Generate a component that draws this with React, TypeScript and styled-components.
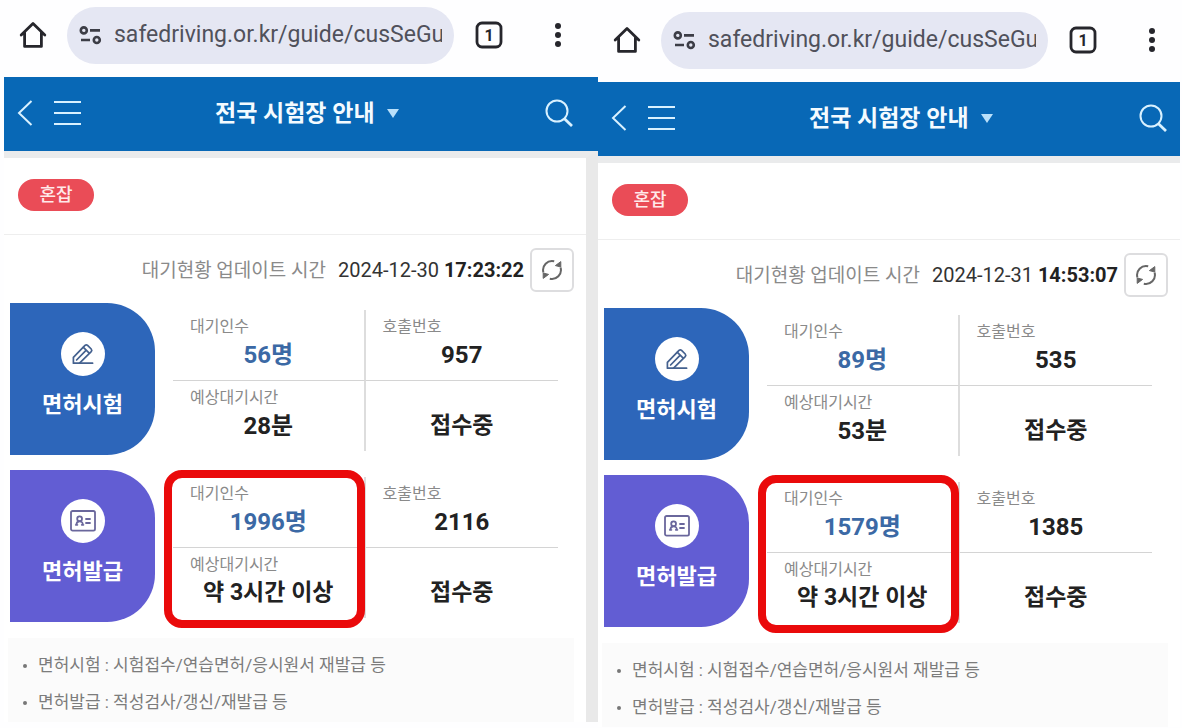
import React from "react";
import styled, { createGlobalStyle } from "styled-components";

const GlobalStyle = createGlobalStyle`
  *, *::before, *::after { box-sizing: border-box; }
  body {
    margin: 0;
    background: #fefeff;
    color: #222;
    font-family: Roboto, "Noto Sans CJK KR", sans-serif;
  }
  button, input, select { font: inherit; }
  dl, dd, dt, ul, p { margin: 0; padding: 0; }
`;

const Page = styled.main`
  display: flex;
  align-items: flex-start;
  padding: 0 2px 0 4px;
`;

const Phone = styled.section<{ $gutter: number; $drop: number }>`
  --gutter: ${(p) => p.$gutter}px;
  flex: 1 1 var(--gutter);
  min-width: 0;
  padding-top: ${(p) => p.$drop}px;
`;

const BrowserBar = styled.div`
  display: flex;
  align-items: center;
  height: 77px;
  padding: 0 calc(var(--gutter) + 15px) 7px 14px;
`;

const IconButton = styled.button<{ $width: number }>`
  display: flex;
  flex: none;
  align-items: center;
  justify-content: center;
  width: ${(p) => p.$width}px;
  height: 30px;
  padding: 0;
  border: 0;
  background: none;
  color: #26262c;
  cursor: pointer;
`;

const AddressPill = styled.label`
  display: flex;
  flex: 1;
  align-items: center;
  gap: 12px;
  min-width: 0;
  height: 57px;
  margin: 0 20px 0 19px;
  padding: 0 12px;
  border-radius: 29px;
  background: #e5e7f3;
  color: #3c3d46;

  svg { flex: none; }
`;

const AddressInput = styled.input`
  flex: 1;
  min-width: 0;
  padding: 0;
  border: 0;
  outline: 0;
  background: none;
  color: #50515b;
  font-size: 23px;
  line-height: 30px;
`;

const BarSpacer = styled.span`
  width: 41px;
`;

const SiteHeader = styled.header`
  display: grid;
  grid-template-columns: 1fr auto 1fr;
  align-items: center;
  height: 74px;
  padding: 0 calc(var(--gutter) + 12px) 2px 12px;
  background: #0868b6;

  button { color: #d9f1ff; }
`;

const HeaderSide = styled.div<{ $end?: boolean }>`
  display: flex;
  gap: 18px;
  justify-content: ${(p) => (p.$end ? "flex-end" : "flex-start")};
`;

const TitlePicker = styled.div`
  position: relative;
  color: #b9e0fa;

  svg {
    position: absolute;
    top: 13px;
    right: 0;
    pointer-events: none;
  }
`;

const TitleSelect = styled.select`
  appearance: none;
  height: 34px;
  padding: 0 24px;
  border: 0;
  outline: 0;
  background: none;
  color: #f4fbff;
  font-size: 23px;
  font-weight: 700;
  cursor: pointer;
`;

const Body = styled.div`
  border-top: 7px solid #eaebec;
  border-right: var(--gutter) solid #e9e9e9;
  background: #fff;
`;

const StatusSection = styled.div`
  height: 77px;
  padding: 21px 14px 0;
  border-bottom: 1px solid #eeeeee;
`;

const StatusBadge = styled.span`
  display: flex;
  align-items: center;
  justify-content: center;
  width: 76px;
  height: 32px;
  border-radius: 16px;
  background: #ea4c57;
  color: #ffe9ea;
  font-size: 18px;
  font-weight: 500;
  line-height: 32px;
`;

const UpdateRow = styled.div`
  display: flex;
  align-items: center;
  justify-content: flex-end;
  gap: 6px;
  height: 56px;
  padding: 0 12px 0 0;
  margin-top: 7px;
`;

const UpdateText = styled.p`
  padding-bottom: 4px;
  font-size: 20px;
  white-space: nowrap;
`;

const UpdateLabel = styled.span`
  margin-right: 12px;
  color: #8a8a8a;
  font-size: 19px;
`;

const UpdateTime = styled.time`
  color: #333;

  strong { color: #222; font-weight: 700; }
`;

const RefreshButton = styled.button`
  display: flex;
  flex: none;
  align-items: center;
  justify-content: center;
  width: 44px;
  height: 44px;
  padding: 0;
  border: 2px solid #dddddf;
  border-radius: 6px;
  background: #fff;
  color: #666;
  cursor: pointer;
`;

const QueueList = styled.div`
  display: flex;
  flex-direction: column;
  gap: 15px;
  padding: 5px 28px 0 6px;
`;

const QueueCard = styled.article`
  display: flex;
  gap: 18px;
`;

const QueueName = styled.div<{ $color: string }>`
  display: flex;
  flex: none;
  flex-direction: column;
  align-items: center;
  width: 145px;
  height: 152px;
  padding-top: 29px;
  border-radius: 0 48px 48px 0;
  background: ${(p) => p.$color};
  color: #fff;
  font-size: 22px;
  font-weight: 700;
  line-height: 30px;
`;

const IconDisc = styled.span`
  display: flex;
  align-items: center;
  justify-content: center;
  width: 44px;
  height: 44px;
  margin-bottom: 14px;
  border-radius: 50%;
  background: #fff;
`;

const Figures = styled.dl`
  position: relative;
  display: grid;
  flex: 1;
  grid-template-columns: 1fr 1fr;
  grid-template-rows: 71px 70px;
  min-width: 0;
  margin-top: 7px;
`;

const Figure = styled.div<{ $right?: boolean; $bottom?: boolean }>`
  padding-top: 5px;
  border-right: ${(p) => (p.$right ? "0" : "2px")} solid #dddddd;
  border-bottom: ${(p) => (p.$bottom ? "0" : "1px")} solid #d4d4d4;

  dt {
    height: 24px;
    padding-left: 17px;
    color: #8a8a8a;
    font-size: 16px;
    line-height: 24px;
  }
`;

const FigureValue = styled.dd<{ $accent?: boolean; $words?: boolean }>`
  color: ${(p) => (p.$accent ? "#3b69a5" : "#222")};
  font-size: ${(p) => (p.$words ? 23 : 24)}px;
  font-weight: 700;
  line-height: 32px;
  text-align: center;
  white-space: nowrap;
`;

const Highlight = styled.span`
  position: absolute;
  top: -7px;
  left: -9px;
  width: calc(50% + 8px);
  height: 158px;
  border: 8px solid #ea0a0b;
  border-radius: 18px;
  pointer-events: none;
`;

const Notes = styled.ul`
  margin: 16px 12px 0 4px;
  padding: 9px 12px 1px;
  background: #fbfbfb;
  list-style: none;
  color: #7c7c7c;
  font-size: 17px;
  line-height: 37px;

  li {
    display: flex;
    align-items: center;
    gap: 11px;
    white-space: nowrap;
  }

  li::before {
    content: "";
    width: 4px;
    height: 4px;
    margin-left: 3px;
    border-radius: 50%;
    background: #777;
  }
`;

const HomeIcon = () => (
  <svg width="28" height="28" viewBox="0 0 28 28" fill="none" stroke="currentColor" strokeWidth="2.8" strokeLinejoin="round" strokeLinecap="round">
    <path d="M2.2 14 14 2.4 25.8 14M5.6 11.5V25.4H22.4V11.5" />
  </svg>
);

const TuneIcon = () => (
  <svg width="23" height="19" viewBox="0 0 23 19" fill="none" stroke="currentColor" strokeWidth="2.6">
    <circle cx="4.8" cy="4.4" r="3" />
    <path d="M11 4.4H21M2 14H11" />
    <circle cx="17.8" cy="14" r="3" />
  </svg>
);

const TabsIcon = () => (
  <svg width="28" height="28" viewBox="0 0 28 28">
    <rect x="2" y="2" width="24" height="24" rx="5" fill="none" stroke="currentColor" strokeWidth="2.8" />
    <text x="14" y="20" textAnchor="middle" fontSize="16" fontWeight="700" fill="currentColor">1</text>
  </svg>
);

const MoreIcon = () => (
  <svg width="8" height="26" viewBox="0 0 8 26" fill="currentColor">
    <circle cx="4" cy="4" r="3" />
    <circle cx="4" cy="13" r="3" />
    <circle cx="4" cy="22" r="3" />
  </svg>
);

const BackIcon = () => (
  <svg width="16" height="28" viewBox="0 0 16 28" fill="none" stroke="currentColor" strokeWidth="2">
    <path d="M14.5 2 2 14 14.5 26" />
  </svg>
);

const MenuIcon = () => (
  <svg width="28" height="28" viewBox="0 0 28 28" fill="none" stroke="currentColor" strokeWidth="2">
    <path d="M0 3H27M0 14H27M0 25H27" />
  </svg>
);

const SearchIcon = () => (
  <svg width="28" height="28" viewBox="0 0 28 28" fill="none" stroke="currentColor" strokeWidth="2">
    <circle cx="12" cy="12" r="10.5" />
    <path d="M19.2 19.6 27 27" strokeWidth="2.8" />
  </svg>
);

const CaretIcon = () => (
  <svg width="12" height="9" viewBox="0 0 12 9" fill="currentColor">
    <path d="M0 0H12L6 9Z" />
  </svg>
);

const RefreshIcon = () => (
  <svg width="22" height="22" viewBox="0 0 22 22" fill="none" stroke="currentColor" strokeWidth="2">
    <path d="M2.4 13.4A9 9 0 0 1 13.2 2.3M19.6 8.6A9 9 0 0 1 8.8 19.7" />
    <path d="M19.8 2.6V8L14.4 6.6ZM2.2 19.4V14L7.6 15.4Z" fill="currentColor" stroke="currentColor" strokeWidth="1" />
  </svg>
);

const PencilIcon = () => (
  <svg width="22" height="22" viewBox="0 0 22 22" fill="none" stroke="#44618f" strokeWidth="1.7" strokeLinejoin="round" strokeLinecap="round">
    <path d="M1.4 20.2V14.4L13 2.4Q14.3 1.2 15.6 2.4L19.2 6Q20.4 7.3 19.2 8.6L7.6 20.2Z" />
    <path d="M11.4 4.4 17.2 10.2M4.6 17 14 7.4M7.6 20.2H20.6" />
  </svg>
);

const LicenseIcon = () => (
  <svg width="26" height="22" viewBox="0 0 26 22" fill="none" stroke="#6a679c" strokeWidth="1.8" strokeLinejoin="round" strokeLinecap="round">
    <rect x="1" y="1" width="24" height="19.6" rx="1.6" />
    <circle cx="9.6" cy="8.8" r="2.4" />
    <path d="M6.4 14.8Q6.4 11.4 9.6 11.4T12.8 14.8M5.8 14.8H7.4M11.8 14.8H13.4M16 9H20M16 13H20" />
  </svg>
);

interface Queue {
  name: string;
  color: string;
  icon: React.ReactNode;
  waiting: string;
  called: string;
  wait: string;
  highlighted?: boolean;
}

interface Snapshot {
  id: string;
  date: string;
  time: string;
  gutter: number;
  drop: number;
  queues: Queue[];
}

const exam = { name: "면허시험", color: "#2d66ba", icon: <PencilIcon /> };
const issue = { name: "면허발급", color: "#625dd3", icon: <LicenseIcon />, highlighted: true };

const snapshots: Snapshot[] = [
  {
    id: "first",
    date: "2024-12-30",
    time: "17:23:22",
    gutter: 12,
    drop: 0,
    queues: [
      { ...exam, waiting: "56명", called: "957", wait: "28분" },
      { ...issue, waiting: "1996명", called: "2116", wait: "약 3시간 이상" },
    ],
  },
  {
    id: "second",
    date: "2024-12-31",
    time: "14:53:07",
    gutter: 0,
    drop: 5,
    queues: [
      { ...exam, waiting: "89명", called: "535", wait: "53분" },
      { ...issue, waiting: "1579명", called: "1385", wait: "약 3시간 이상" },
    ],
  },
];

const QueueRow = ({ queue }: { queue: Queue }) => (
  <QueueCard>
    <QueueName $color={queue.color}>
      <IconDisc>{queue.icon}</IconDisc>
      {queue.name}
    </QueueName>
    <Figures>
      <Figure>
        <dt>대기인수</dt>
        <FigureValue $accent>{queue.waiting}</FigureValue>
      </Figure>
      <Figure $right>
        <dt>호출번호</dt>
        <FigureValue>{queue.called}</FigureValue>
      </Figure>
      <Figure $bottom>
        <dt>예상대기시간</dt>
        <FigureValue $words={queue.wait.includes(" ")}>{queue.wait}</FigureValue>
      </Figure>
      <Figure $right $bottom>
        <dt />
        <FigureValue $words>접수중</FigureValue>
      </Figure>
      {queue.highlighted && <Highlight />}
    </Figures>
  </QueueCard>
);

const PhoneView = ({ shot }: { shot: Snapshot }) => (
  <Phone $gutter={shot.gutter} $drop={shot.drop}>
    <BrowserBar>
      <IconButton $width={30} aria-label="홈"><HomeIcon /></IconButton>
      <AddressPill htmlFor={`address-${shot.id}`}>
        <TuneIcon />
        <AddressInput id={`address-${shot.id}`} aria-label="주소" defaultValue="safedriving.or.kr/guide/cusSeGuide" />
      </AddressPill>
      <IconButton $width={30} aria-label="탭"><TabsIcon /></IconButton>
      <BarSpacer />
      <IconButton $width={26} aria-label="더보기"><MoreIcon /></IconButton>
    </BrowserBar>
    <SiteHeader>
      <HeaderSide>
        <IconButton $width={18} aria-label="뒤로"><BackIcon /></IconButton>
        <IconButton $width={32} aria-label="메뉴"><MenuIcon /></IconButton>
      </HeaderSide>
      <TitlePicker>
        <TitleSelect aria-label="페이지 선택">
          <option>전국 시험장 안내</option>
        </TitleSelect>
        <CaretIcon />
      </TitlePicker>
      <HeaderSide $end>
        <IconButton $width={30} aria-label="검색"><SearchIcon /></IconButton>
      </HeaderSide>
    </SiteHeader>
    <Body>
      <StatusSection>
        <StatusBadge>혼잡</StatusBadge>
      </StatusSection>
      <UpdateRow>
        <UpdateText>
          <UpdateLabel>대기현황 업데이트 시간</UpdateLabel>
          <UpdateTime dateTime={`${shot.date}T${shot.time}`}>
            {shot.date} <strong>{shot.time}</strong>
          </UpdateTime>
        </UpdateText>
        <RefreshButton aria-label="새로고침"><RefreshIcon /></RefreshButton>
      </UpdateRow>
      <QueueList>
        {shot.queues.map((queue) => (
          <QueueRow key={queue.name} queue={queue} />
        ))}
      </QueueList>
      <Notes>
        <li>면허시험 : 시험접수/연습면허/응시원서 재발급 등</li>
        <li>면허발급 : 적성검사/갱신/재발급 등</li>
      </Notes>
    </Body>
  </Phone>
);

export default function App() {
  return (
    <>
      <GlobalStyle />
      <Page>
        {snapshots.map((shot) => (
          <PhoneView key={shot.id} shot={shot} />
        ))}
      </Page>
    </>
  );
}
